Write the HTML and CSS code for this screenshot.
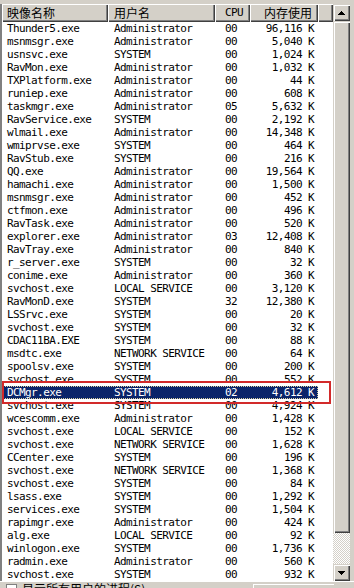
FILE: index.html
```html
<!DOCTYPE html>
<html>
<head>
	<title>Windows 任务管理器 - 进程</title>
	<link rel="stylesheet" href="styles.css">
</head>
<body>
	<div class="frame">
		<div class="top_strip"></div>

		<div class="listview">
			<div class="list">
				<div class="head">
					<div class="hcell">映像名称</div>
					<div class="hcell">用户名</div>
					<div class="hcell hcpu">CPU</div>
					<div class="hcell hmem">内存使用</div>
					<div class="hcell"></div>
				</div>

				<div class="rows">
					<div class="row"><span>Thunder5.exe</span><span>Administrator</span><span class="cpu">00</span><span class="mem">96,116 K</span></div>
					<div class="row"><span>msnmsgr.exe</span><span>Administrator</span><span class="cpu">00</span><span class="mem">5,040 K</span></div>
					<div class="row"><span>usnsvc.exe</span><span>SYSTEM</span><span class="cpu">00</span><span class="mem">1,024 K</span></div>
					<div class="row"><span>RavMon.exe</span><span>Administrator</span><span class="cpu">00</span><span class="mem">1,032 K</span></div>
					<div class="row"><span>TXPlatform.exe</span><span>Administrator</span><span class="cpu">00</span><span class="mem">44 K</span></div>
					<div class="row"><span>runiep.exe</span><span>Administrator</span><span class="cpu">00</span><span class="mem">608 K</span></div>
					<div class="row"><span>taskmgr.exe</span><span>Administrator</span><span class="cpu">05</span><span class="mem">5,632 K</span></div>
					<div class="row"><span>RavService.exe</span><span>SYSTEM</span><span class="cpu">00</span><span class="mem">2,192 K</span></div>
					<div class="row"><span>wlmail.exe</span><span>Administrator</span><span class="cpu">00</span><span class="mem">14,348 K</span></div>
					<div class="row"><span>wmiprvse.exe</span><span>SYSTEM</span><span class="cpu">00</span><span class="mem">464 K</span></div>
					<div class="row"><span>RavStub.exe</span><span>SYSTEM</span><span class="cpu">00</span><span class="mem">216 K</span></div>
					<div class="row"><span>QQ.exe</span><span>Administrator</span><span class="cpu">00</span><span class="mem">19,564 K</span></div>
					<div class="row"><span>hamachi.exe</span><span>Administrator</span><span class="cpu">00</span><span class="mem">1,500 K</span></div>
					<div class="row"><span>msnmsgr.exe</span><span>Administrator</span><span class="cpu">00</span><span class="mem">452 K</span></div>
					<div class="row"><span>ctfmon.exe</span><span>Administrator</span><span class="cpu">00</span><span class="mem">496 K</span></div>
					<div class="row"><span>RavTask.exe</span><span>Administrator</span><span class="cpu">00</span><span class="mem">520 K</span></div>
					<div class="row"><span>explorer.exe</span><span>Administrator</span><span class="cpu">03</span><span class="mem">12,408 K</span></div>
					<div class="row"><span>RavTray.exe</span><span>Administrator</span><span class="cpu">00</span><span class="mem">840 K</span></div>
					<div class="row"><span>r_server.exe</span><span>SYSTEM</span><span class="cpu">00</span><span class="mem">32 K</span></div>
					<div class="row"><span>conime.exe</span><span>Administrator</span><span class="cpu">00</span><span class="mem">360 K</span></div>
					<div class="row"><span>svchost.exe</span><span>LOCAL SERVICE</span><span class="cpu">00</span><span class="mem">3,120 K</span></div>
					<div class="row"><span>RavMonD.exe</span><span>SYSTEM</span><span class="cpu">32</span><span class="mem">12,380 K</span></div>
					<div class="row"><span>LSSrvc.exe</span><span>SYSTEM</span><span class="cpu">00</span><span class="mem">20 K</span></div>
					<div class="row"><span>svchost.exe</span><span>SYSTEM</span><span class="cpu">00</span><span class="mem">32 K</span></div>
					<div class="row"><span>CDAC11BA.EXE</span><span>SYSTEM</span><span class="cpu">00</span><span class="mem">88 K</span></div>
					<div class="row"><span>msdtc.exe</span><span>NETWORK SERVICE</span><span class="cpu">00</span><span class="mem">64 K</span></div>
					<div class="row"><span>spoolsv.exe</span><span>SYSTEM</span><span class="cpu">00</span><span class="mem">200 K</span></div>
					<div class="row"><span>svchost.exe</span><span>SYSTEM</span><span class="cpu">00</span><span class="mem">552 K</span></div>
					<div class="row selected"><span>DCMgr.exe</span><span>SYSTEM</span><span class="cpu">02</span><span class="mem">4,612 K</span></div>
					<div class="row"><span>svchost.exe</span><span>SYSTEM</span><span class="cpu">00</span><span class="mem">4,924 K</span></div>
					<div class="row"><span>wcescomm.exe</span><span>Administrator</span><span class="cpu">00</span><span class="mem">1,428 K</span></div>
					<div class="row"><span>svchost.exe</span><span>LOCAL SERVICE</span><span class="cpu">00</span><span class="mem">152 K</span></div>
					<div class="row"><span>svchost.exe</span><span>NETWORK SERVICE</span><span class="cpu">00</span><span class="mem">1,628 K</span></div>
					<div class="row"><span>CCenter.exe</span><span>SYSTEM</span><span class="cpu">00</span><span class="mem">196 K</span></div>
					<div class="row"><span>svchost.exe</span><span>NETWORK SERVICE</span><span class="cpu">00</span><span class="mem">1,368 K</span></div>
					<div class="row"><span>svchost.exe</span><span>SYSTEM</span><span class="cpu">00</span><span class="mem">84 K</span></div>
					<div class="row"><span>lsass.exe</span><span>SYSTEM</span><span class="cpu">00</span><span class="mem">1,292 K</span></div>
					<div class="row"><span>services.exe</span><span>SYSTEM</span><span class="cpu">00</span><span class="mem">1,504 K</span></div>
					<div class="row"><span>rapimgr.exe</span><span>Administrator</span><span class="cpu">00</span><span class="mem">424 K</span></div>
					<div class="row"><span>alg.exe</span><span>LOCAL SERVICE</span><span class="cpu">00</span><span class="mem">92 K</span></div>
					<div class="row"><span>winlogon.exe</span><span>SYSTEM</span><span class="cpu">00</span><span class="mem">1,736 K</span></div>
					<div class="row"><span>radmin.exe</span><span>Administrator</span><span class="cpu">00</span><span class="mem">560 K</span></div>
					<div class="row"><span>svchost.exe</span><span>SYSTEM</span><span class="cpu">00</span><span class="mem">932 K</span></div>
				</div>
			</div>

			<div class="scrollbar">
				<div class="sbtn">
					<svg width="7" height="4" viewBox="0 0 7 4"><path d="M3 0h1v1h1v1h1v1h1v1H0V3h1V2h1V1h1z" fill="#000"/></svg>
				</div>
				<div class="track">
					<div class="thumb"></div>
				</div>
				<div class="sbtn">
					<svg width="7" height="4" viewBox="0 0 7 4"><path d="M0 0h7v1H6v1H5v1H4v1H3V3H2V2H1V1H0z" fill="#000"/></svg>
				</div>
			</div>
		</div>

		<div class="bottom_strip">
			<div class="check"></div>
			<div class="check_label">显示所有用户的进程(S)</div>
			<div class="end_btn">结束进程(E)</div>
		</div>

		<div class="mark"></div>
	</div>
</body>
</html>
```

FILE: styles.css
```css
body {
	margin: 0;
	background: #d4d0c8;
}

.frame {
	position: relative;
	width: 354px;
	height: 588px;
	overflow: hidden;
	background: #d4d0c8;
	display: flex;
	flex-direction: column;
}

.top_strip {
	height: 4px;
	flex: none;
}

.listview {
	display: flex;
	width: 350px;
	height: 577px;
	flex: none;
	overflow: hidden;
	background: #fff;
	border-left: 2px solid #808080;
	box-sizing: border-box;
}

.list {
	width: 331px;
	flex: none;
	overflow: hidden;
}

.head {
	display: grid;
	grid-template-columns: 106px 107px 35px 68px 15px;
	height: 18px;
}

.hcell {
	background: #d4d0c8;
	box-shadow: inset 1px 1px #fff, inset -1px -1px #404040, inset -2px -2px #808080;
	font-family: "Noto Sans CJK SC", sans-serif;
	font-size: 12px;
	line-height: 18px;
	color: #000;
	padding-left: 5px;
	white-space: nowrap;
	overflow: hidden;
}

.hcell:nth-child(2) {
	padding-left: 6px;
}

.hcpu {
	font-family: "DejaVu Sans Mono", monospace;
	font-size: 11px;
	letter-spacing: -0.6px;
	padding-left: 10px;
}

.hmem {
	text-align: right;
	padding-left: 0;
	padding-right: 6px;
}

.row {
	display: grid;
	grid-template-columns: 106px 107px 35px 68px;
	width: 316px;
	height: 13px;
	font-family: "DejaVu Sans Mono", monospace;
	font-size: 11px;
	letter-spacing: -0.6px;
	line-height: 13px;
	color: #000;
	white-space: nowrap;
}

.row span {
	overflow: hidden;
	padding-left: 5px;
}

.row span:nth-child(2) {
	padding-left: 6px;
}

.row .cpu {
	padding-left: 10px;
}

.row .mem {
	text-align: right;
	padding-left: 0;
	padding-right: 4px;
}

.row.selected {
	background: #0a246a;
	color: #fff;
	outline: 1px dotted #d8d0a0;
	outline-offset: -1px;
}

.scrollbar {
	width: 17px;
	flex: none;
	display: flex;
	flex-direction: column;
	background: #d4d0c8;
}

.sbtn {
	height: 17px;
	flex: none;
	display: flex;
	align-items: center;
	justify-content: center;
	background: #d4d0c8;
	box-shadow: inset 1px 1px #d4d0c8, inset 2px 2px #fff, inset -1px -1px #404040, inset -2px -2px #808080;
}

.track {
	flex: 1;
	background: repeating-conic-gradient(#fff 0 25%, #d4d0c8 0 50%) 0 0 / 2px 2px;
}

.thumb {
	height: 512px;
	background: #d4d0c8;
	box-shadow: inset 1px 1px #d4d0c8, inset 2px 2px #fff, inset -1px -1px #404040, inset -2px -2px #808080;
}

.bottom_strip {
	flex: 1;
	display: flex;
	align-items: flex-start;
	border-top: 1px solid #fff;
	font-family: "Noto Sans CJK SC", sans-serif;
	font-size: 12px;
	color: #000;
}

.check {
	width: 11px;
	height: 11px;
	margin: 2px 0 0 6px;
	background: #fff;
	border: 1px solid #808080;
	box-sizing: border-box;
}

.check_label {
	margin: -1px 0 0 5px;
	line-height: 16px;
}

.end_btn {
	margin: 2px 0 0 auto;
	margin-right: 20px;
	width: 80px;
	height: 22px;
	text-align: center;
	line-height: 22px;
	border-top: 1px solid #fff;
	border-left: 1px solid #fff;
	background: #d4d0c8;
}

.mark {
	position: absolute;
	left: 2px;
	top: 381px;
	width: 329px;
	height: 23px;
	border: 2px solid #d22a2a;
	box-sizing: border-box;
}
```
